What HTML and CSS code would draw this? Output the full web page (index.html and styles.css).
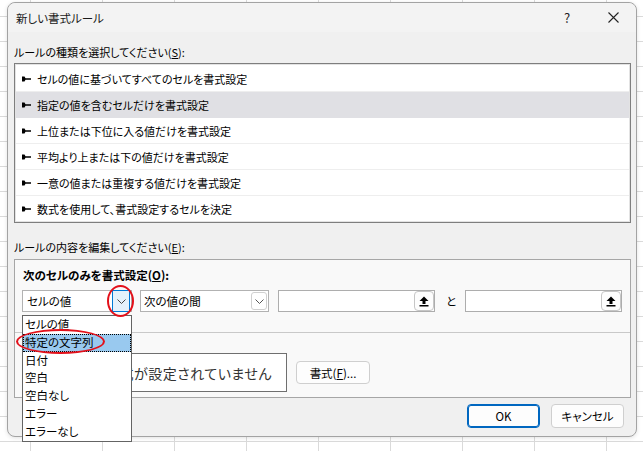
FILE: index.html
```html
<!DOCTYPE html>
<html lang="ja">
<head>
<meta charset="utf-8">
<title>新しい書式ルール</title>
<link rel="stylesheet" href="styles.css">
</head>
<body>
<div class="dialog">
  <div class="titlebar">
    <span class="title">新しい書式ルール</span>
    <span class="help">?</span>
    <span class="close"><svg width="11" height="11" viewBox="0 0 11 11"><path d="M0.5 0.5L10.5 10.5M10.5 0.5L0.5 10.5" stroke="#222" stroke-width="1.1" fill="none"/></svg></span>
  </div>
  <div class="content">
    <div class="label first">ルールの種類を選択してください(<u>S</u>):</div>
    <ul class="rules">
      <li><svg class="rarrow" width="9" height="6" viewBox="0 0 9 6"><path d="M0 0.5H2.5L3.5 2.2H9V3.8H3.5L2.5 5.5H0Z" fill="#000"/></svg>セルの値に基づいてすべてのセルを書式設定</li>
      <li class="sel"><svg class="rarrow" width="9" height="6" viewBox="0 0 9 6"><path d="M0 0.5H2.5L3.5 2.2H9V3.8H3.5L2.5 5.5H0Z" fill="#000"/></svg>指定の値を含むセルだけを書式設定</li>
      <li><svg class="rarrow" width="9" height="6" viewBox="0 0 9 6"><path d="M0 0.5H2.5L3.5 2.2H9V3.8H3.5L2.5 5.5H0Z" fill="#000"/></svg>上位または下位に入る値だけを書式設定</li>
      <li><svg class="rarrow" width="9" height="6" viewBox="0 0 9 6"><path d="M0 0.5H2.5L3.5 2.2H9V3.8H3.5L2.5 5.5H0Z" fill="#000"/></svg>平均より上または下の値だけを書式設定</li>
      <li><svg class="rarrow" width="9" height="6" viewBox="0 0 9 6"><path d="M0 0.5H2.5L3.5 2.2H9V3.8H3.5L2.5 5.5H0Z" fill="#000"/></svg>一意の値または重複する値だけを書式設定</li>
      <li class="last"><svg class="rarrow" width="9" height="6" viewBox="0 0 9 6"><path d="M0 0.5H2.5L3.5 2.2H9V3.8H3.5L2.5 5.5H0Z" fill="#000"/></svg>数式を使用して、書式設定するセルを決定</li>
    </ul>
    <div class="label second">ルールの内容を編集してください(<u>E</u>):</div>
    <div class="panel">
      <div class="panel-title">次のセルのみを書式設定(<u>O</u>):</div>
      <div class="controls">
        <div class="combo c1">
          <span class="ctext">セルの値</span>
          <span class="ddbtn active"><svg width="9" height="5" viewBox="0 0 9 5"><path d="M0.5 0.5L4.5 4.5L8.5 0.5" stroke="#444" stroke-width="1" fill="none"/></svg></span>
          <ul class="droplist">
            <li>セルの値</li>
            <li class="hl">特定の文字列</li>
            <li>日付</li>
            <li>空白</li>
            <li>空白なし</li>
            <li>エラー</li>
            <li>エラーなし</li>
          </ul>
          <span class="ring ring1"></span>
          <span class="ring ring2"></span>
        </div>
        <div class="combo c2">
          <span class="ctext">次の値の間</span>
          <span class="ddbtn"><svg width="9" height="5" viewBox="0 0 9 5"><path d="M0.5 0.5L4.5 4.5L8.5 0.5" stroke="#555" stroke-width="1" fill="none"/></svg></span>
        </div>
        <div class="refinput r1">
          <span class="refbtn"><svg width="10" height="11" viewBox="0 0 10 11"><path d="M5 0.5L9.5 5H6.5V8H3.5V5H0.5Z" fill="#000"/><rect x="0.5" y="9" width="9" height="1.5" fill="#000"/></svg></span>
        </div>
        <span class="to">と</span>
        <div class="refinput">
          <span class="refbtn"><svg width="10" height="11" viewBox="0 0 10 11"><path d="M5 0.5L9.5 5H6.5V8H3.5V5H0.5Z" fill="#000"/><rect x="0.5" y="9" width="9" height="1.5" fill="#000"/></svg></span>
        </div>
      </div>
      <div class="divider"></div>
      <div class="preview-row">
        <div class="preview">書式が設定されていません</div>
        <button class="btn fmt">書式(<u>F</u>)...</button>
      </div>
    </div>
    <div class="footer">
      <button class="btn ok">OK</button>
      <button class="btn cancel">キャンセル</button>
    </div>
  </div>
</div>
</body>
</html>
```
FILE: styles.css
```css
html, body {
  margin: 0;
  padding: 0;
  height: 100%;
}
body {
  background-color: #ffffff;
  background-image:
    linear-gradient(to right, #dadada 1px, transparent 1px),
    linear-gradient(to bottom, #dadada 1px, transparent 1px);
  background-size: 72px 25px;
  background-position: 30px 16px;
  font-family: "Noto Sans CJK JP", "Noto Sans", sans-serif;
  font-feature-settings: "palt";
  font-size: 11px;
  color: #000;
  overflow: hidden;
}
u { text-decoration: underline; text-underline-offset: 1px; }

.dialog {
  box-sizing: border-box;
  margin: 2px 0 0 7px;
  width: 630px;
  height: 435px;
  background: #f0f0f0;
  border: 1px solid #a3a3a3;
  border-radius: 8px;
  box-shadow: 0 1px 4px rgba(0,0,0,0.12);
  display: flex;
  flex-direction: column;
}

.titlebar {
  height: 29px;
  display: flex;
  align-items: center;
  padding-left: 8px;
  background: #f3f3f3;
  border-radius: 8px 8px 0 0;
  line-height: 16px;
  font-size: 11.5px;
}
.title { flex: 1; color: #1a1a1a; }
.help { width: 10px; margin-right: 34px; font-size: 13px; color: #222; }
.close { width: 11px; height: 11px; margin-right: 17px; display: flex; }

.content {
  padding: 0 5px 0 6px;
  display: flex;
  flex-direction: column;
}
.label { line-height: 16px; height: 16px; }
.label.first { margin-top: 12px; }
.label.second { margin-top: 16px; }

.rules {
  list-style: none;
  margin: 3px 0 0 0;
  padding: 2px 1px 0 1px;
  background: #fff;
  border: 1px solid #7e7e7e;
  box-shadow: inset 0 0 0 1px #e3e3e3;
}
.rules li {
  box-sizing: border-box;
  height: 26px;
  display: flex;
  align-items: center;
  padding-left: 6px;
  border-bottom: 1px solid #eeeeee;
  line-height: 16px;
}
.rules li.last { border-bottom: none; }
.rules li.sel { background: #e0e0e4; border-bottom-color: #e0e0e4; }
.rarrow { margin-right: 6px; flex: none; }

.panel {
  box-sizing: border-box;
  margin-top: 4px;
  height: 139px;
  border: 1px solid #a6a6a6;
  background: #f9f9f9;
  padding-left: 8px;
  display: flex;
  flex-direction: column;
}
.panel-title {
  font-weight: bold;
  font-size: 11.5px;
  line-height: 16px;
  margin-top: 7px;
}
.controls {
  display: flex;
  align-items: center;
  margin-top: 7px;
  margin-left: -1px;
  height: 22px;
}
.combo {
  position: relative;
  box-sizing: border-box;
  height: 22px;
  background: #fff;
  border: 1px solid #b2b2b2;
  display: flex;
  align-items: center;
  line-height: 16px;
  font-size: 11.5px;
}
.combo.c1 { width: 110px; padding-left: 4px; }
.combo.c2 { width: 129px; margin-left: 8px; padding-left: 3px; }
.ddbtn {
  position: absolute;
  top: 1px;
  bottom: 1px;
  right: 1px;
  width: 16px;
  box-sizing: border-box;
  border: 1px solid #d0d0d0;
  border-radius: 3px;
  background: #fff;
  display: flex;
  align-items: center;
  justify-content: center;
}
.ddbtn.active {
  top: -1px;
  bottom: -1px;
  width: 18px;
  border: 1px solid #0078d4;
  border-radius: 0;
  background: #e5f1fb;
}

.refinput {
  position: relative;
  box-sizing: border-box;
  width: 157px;
  height: 22px;
  background: #fff;
  border: 1px solid #adadad;
}
.refinput.r1 { margin-left: 9px; }
.refbtn {
  position: absolute;
  top: 0;
  bottom: 0;
  right: 0;
  width: 20px;
  box-sizing: border-box;
  border: 1px solid #c6c6c6;
  border-radius: 4px;
  background: #fdfdfd;
  display: flex;
  align-items: center;
  justify-content: center;
}
.to { margin: 0 9px 0 11px; line-height: 16px; font-size: 11.5px; }

.divider {
  height: 1px;
  background: #c9c9c9;
  margin: 20px 0 0 -8px;
}
.preview-row {
  display: flex;
  align-items: center;
  margin-top: 20px;
}
.preview {
  box-sizing: border-box;
  width: 197px;
  height: 39px;
  margin-left: 67px;
  border: 1px solid #6f6f6f;
  background: #fff;
  font-size: 14px;
  color: #333;
  display: flex;
  align-items: center;
  justify-content: center;
  letter-spacing: 0.5px;
}

.btn {
  font-family: inherit;
  font-feature-settings: "palt";
  font-size: 11.5px;
  color: #000;
  background: #fdfdfd;
  border: 1px solid #cfcfcf;
  border-radius: 4px;
  padding: 0;
  line-height: 16px;
}
.fmt { width: 74px; height: 23px; margin-left: 9px; }

.footer {
  display: flex;
  justify-content: flex-end;
  gap: 11px;
  margin-top: 6px;
  padding-right: 7px;
}
.ok, .cancel { width: 73px; height: 24px; }
.ok { border: 1px solid #0067c0; box-shadow: inset 0 0 0 1px #0067c0; background: #fdfdfd; }

.droplist {
  position: absolute;
  left: -1px;
  top: 24px;
  width: 110px;
  box-sizing: border-box;
  margin: 0;
  padding: 0;
  list-style: none;
  background: #fff;
  border: 1px solid #646464;
  z-index: 5;
  font-size: 11.5px;
}
.droplist li {
  height: 17.8px;
  line-height: 17.8px;
  padding-left: 2px;
  box-sizing: border-box;
}
.droplist li.hl {
  background: #99c9ef;
  outline: 1px dotted #000;
  outline-offset: -1px;
}

.ring {
  position: absolute;
  border: 2px solid #e3101a;
  border-radius: 50%;
  box-sizing: border-box;
  z-index: 10;
  pointer-events: none;
}
.ring1 { left: 84px; top: -6px; width: 27px; height: 32px; }
.ring2 { left: -7px; top: 38px; width: 89px; height: 25px; }
```
